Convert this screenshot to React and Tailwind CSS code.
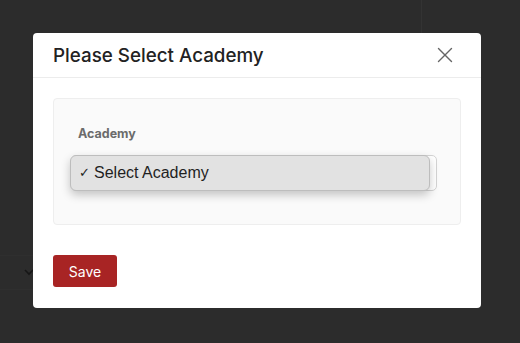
import { X } from 'lucide-react';

export default function App() {
  return (
    <div className="relative w-[520px] h-[343px] overflow-hidden bg-[#2c2c2c] font-['Inter',sans-serif]">
      {/* page behind the overlay */}
      <div className="flex h-full">
        <div className="w-[421px] flex flex-col">
          <div className="h-[255px]" />
          <div className="h-[35px] border-y border-[#2f2f2f] flex items-center pl-6">
            <svg width="10" height="7" viewBox="0 0 10 7" fill="none">
              <path d="M1 1l4 4 4-4" stroke="#161616" strokeWidth="1.6" />
            </svg>
          </div>
        </div>
        <div className="flex-1 flex flex-col">
          <div className="h-[200px] border-l border-[#333333]" />
        </div>
      </div>

      {/* modal */}
      <div className="absolute inset-0 pt-[33px] pl-[33px]">
        <div className="w-[448px] h-[275px] bg-white rounded-[4px] flex flex-col">
          <div className="h-[45px] border-b border-[#ececec] flex items-center justify-between pl-5 pr-[23px] pt-[2px]">
            <h2 className="text-[18.8px] font-medium text-[#222222]">Please Select Academy</h2>
            <X size={26} strokeWidth={1.3} className="text-[#666666] -mt-[2px]" />
          </div>

          <div className="px-5 pt-5">
            <div className="h-[127px] bg-[#fafafa] border border-[#eeeeee] rounded-[4px] pt-[26px] pl-[16px] pr-[24px]">
              <div className="pl-[8px] text-[12.5px] font-bold text-[#6b6b6b]">Academy</div>
              <div className="relative mt-[11px] h-[36px]">
                <div className="absolute left-[1px] top-0 w-[366px] h-[36px] rounded-[5px] border border-[#d4d4d4] bg-white" />
                <div className="absolute left-0 top-0 w-[360px] h-[36px] rounded-[6px] bg-[#e2e2e2] border border-[#bdbdbd] shadow-[0_4px_10px_rgba(0,0,0,0.22)] flex items-center pl-[8px] text-[16px] text-[#1f1f1f] font-['Helvetica','Liberation_Sans',sans-serif]">
                  <span className="text-[13px] mr-[4px]">✓</span>Select Academy
                </div>
              </div>
            </div>
          </div>

          <div className="px-5 pt-[30px]">
            <button className="w-[64px] h-[32px] bg-[#a82424] rounded-[3px] text-white text-[14px]">Save</button>
          </div>
        </div>
      </div>
    </div>
  );
}
